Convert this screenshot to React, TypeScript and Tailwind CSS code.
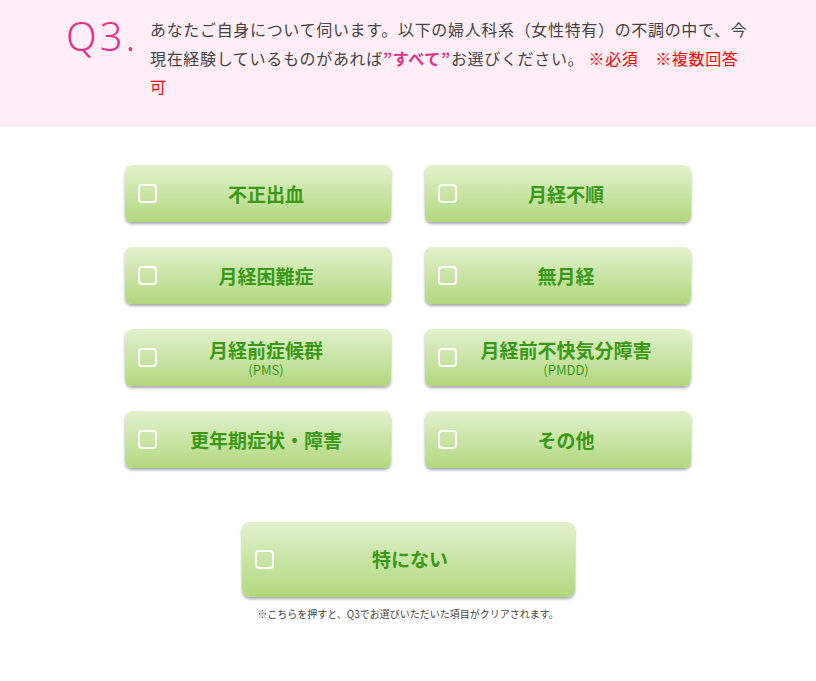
import React from "react";

const Box = () => (
  <span className="block w-[19px] h-[19px] rounded-[4px] border-2 border-white shrink-0" />
);

function Opt({ label, sub }: { label: string; sub?: string }) {
  return (
    <div className="h-[57px] rounded-[7px] bg-linear-to-b from-[#e2f1cc] to-[#b1d87d] shadow-[0_2px_3px_rgba(0,0,0,0.35)] flex items-center pl-[13px]">
      <Box />
      <div className="flex-1 -ml-[16px] flex flex-col items-center justify-center text-[#3a9a18]">
        <span className="text-[19px] font-bold leading-[24px]">{label}</span>
        {sub && <span className="text-[13px] leading-[16px] font-normal">{sub}</span>}
      </div>
    </div>
  );
}

export default function App() {
  const font = { fontFamily: '"Noto Sans CJK JP", "Noto Sans", sans-serif' };
  return (
    <div className="w-[816px] h-[681px] bg-white" style={font}>
      <div className="h-[127px] bg-[#ffeef8] flex pl-[66px] pt-[12px]">
        <div className="w-[84px] mt-[3px] text-[#e4318a] text-[40px] font-light leading-[42px] tracking-[3px]" style={{ fontFamily: '"Noto Sans", sans-serif' }}>
          Q3.
        </div>
        <p className="w-[602px] mt-[3px] text-[16px] font-normal leading-[28.5px] text-[#444] tracking-[0.67px]">
          あなたご自身について伺います。以下の婦人科系（女性特有）の不調の中で、今現在経験しているものがあれば
          <span className="text-[#e4318a] font-bold">”すべて”</span>
          お選びください。
          <span className="text-[#ff0000] font-normal">&nbsp;※必須　※複数回答可</span>
        </p>
      </div>
      <div className="pt-[38px] flex flex-col items-center">
        <div className="grid grid-cols-[266px_266px] gap-x-[34px] gap-y-[25px]">
          <Opt label="不正出血" />
          <Opt label="月経不順" />
          <Opt label="月経困難症" />
          <Opt label="無月経" />
          <Opt label="月経前症候群" sub="(PMS)" />
          <Opt label="月経前不快気分障害" sub="(PMDD)" />
          <Opt label="更年期症状・障害" />
          <Opt label="その他" />
        </div>
        <div className="mt-[54px] w-[333px] h-[75px] rounded-[8px] bg-linear-to-b from-[#e2f1cc] to-[#b1d87d] shadow-[0_2px_3px_rgba(0,0,0,0.35)] flex items-center pl-[13px]">
          <Box />
          <div className="flex-1 text-center pr-[28px] text-[#3a9a18] text-[19px] font-bold">特にない</div>
        </div>
        <p className="mt-[10px] text-[10px] text-[#444] leading-[14px]">
          ※こちらを押すと、Q3でお選びいただいた項目がクリアされます。
        </p>
      </div>
    </div>
  );
}
